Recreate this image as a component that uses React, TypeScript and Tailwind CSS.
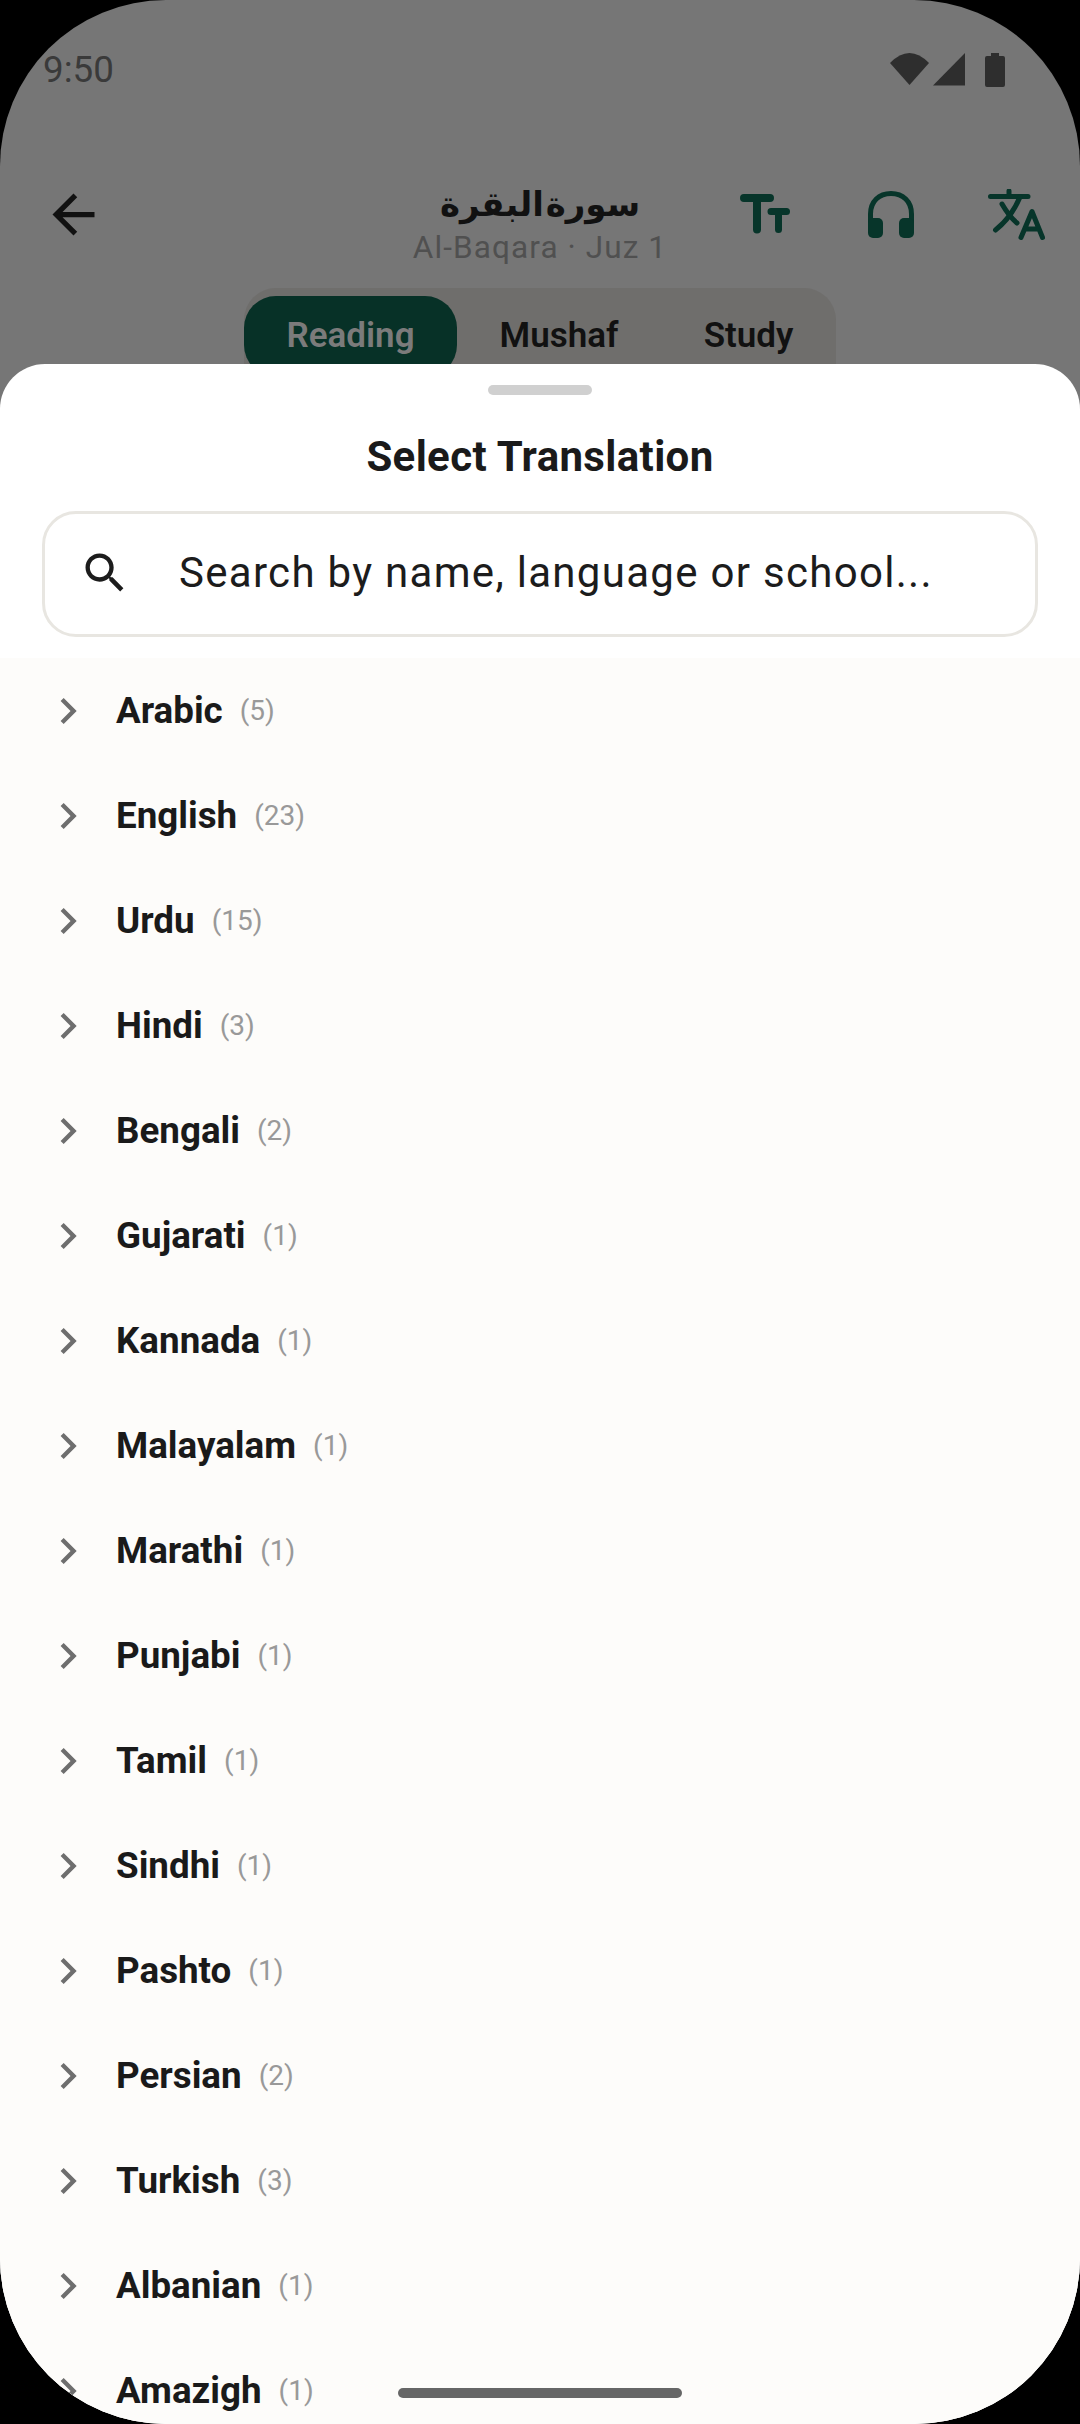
const languages = [
  { name: 'Arabic', count: 5 },
  { name: 'English', count: 23 },
  { name: 'Urdu', count: 15 },
  { name: 'Hindi', count: 3 },
  { name: 'Bengali', count: 2 },
  { name: 'Gujarati', count: 1 },
  { name: 'Kannada', count: 1 },
  { name: 'Malayalam', count: 1 },
  { name: 'Marathi', count: 1 },
  { name: 'Punjabi', count: 1 },
  { name: 'Tamil', count: 1 },
  { name: 'Sindhi', count: 1 },
  { name: 'Pashto', count: 1 },
  { name: 'Persian', count: 2 },
  { name: 'Turkish', count: 3 },
  { name: 'Albanian', count: 1 },
  { name: 'Amazigh', count: 1 },
];

const StatusIcons = () => (
  <div className="flex items-start">
    <svg width="40" height="33" viewBox="0 0 40 33" className="block">
      <path d="M0 10 Q19.5 -10 39 10 L19.5 32 Z" fill="#2e2e2e" />
    </svg>
    <svg width="33" height="33" viewBox="0 0 33 33" className="ml-[3px] block">
      <path d="M0 32.5 L32 0 V32.5 Z" fill="#2e2e2e" />
    </svg>
    <svg width="20" height="34" viewBox="0 0 20 34" className="ml-[19px] block">
      <path d="M6 0 H14 V3 H18 Q20 3 20 5 V32 Q20 34 18 34 H2 Q0 34 0 32 V5 Q0 3 2 3 H6 Z" fill="#2e2e2e" />
    </svg>
  </div>
);

const TextSizeIcon = () => (
  <svg width="50" height="40" viewBox="0 0 50 40" className="block">
    <g stroke="#07352a" strokeLinecap="round" fill="none">
      <path d="M4 4 H30 M17 4 V35.5" strokeWidth="8" />
      <path d="M31 17.5 H46.5 M38.5 17.5 V35.5" strokeWidth="7" />
    </g>
  </svg>
);

const HeadphonesIcon = () => (
  <svg width="46" height="47" viewBox="0 0 46 47" className="block">
    <path d="M2.5 32 V23 C2.5 10.5 11 2.5 23 2.5 C35 2.5 43.5 10.5 43.5 23 V32" stroke="#07352a" strokeWidth="5" fill="none" />
    <rect x="0" y="27" width="15" height="20" rx="5" fill="#07352a" />
    <rect x="31" y="27" width="15" height="20" rx="5" fill="#07352a" />
  </svg>
);

const TranslateIcon = () => (
  <svg width="57" height="51" viewBox="0 0 57 51" className="block">
    <g stroke="#07352a" strokeWidth="5" strokeLinecap="round" strokeLinejoin="round" fill="none">
      <path d="M2.5 7.5 H40 M21 2 V7.5" />
      <path d="M32 8 C27 20 19 32 7.5 41" />
      <path d="M14 15 C18 22 23 29 29 34" />
      <path d="M33 48.5 L44 22.5 L54.5 48.5 M37 40 H51" />
    </g>
  </svg>
);

const App = () => {
  return (
    <div className="w-[1080px] h-[2424px] bg-black overflow-hidden font-['Roboto',sans-serif]">
      <div className="relative w-full h-full rounded-[166px] overflow-hidden bg-[#767676]">
        {/* Status bar */}
        <div className="flex items-center justify-between h-[140px] pl-[43px] pr-[75px]">
          <span className="text-[36.75px] leading-none text-[#3a3a3a]">9:50</span>
          <StatusIcons />
        </div>

        {/* Header */}
        <div className="flex items-center h-[148px]">
          <div className="w-[400px] pl-[42px]">
            <svg width="63" height="63" viewBox="0 0 24 24" className="block" fill="#111111">
              <path d="M20 11H7.83l5.59-5.59L12 4l-8 8 8 8 1.41-1.41L7.83 13H20v-2z" />
            </svg>
          </div>
          <div className="w-[280px] flex flex-col items-center pt-[16px]">
            <span dir="rtl" className="h-[52px] text-[34px] leading-[52px] font-bold [word-spacing:-10px] text-[#111111] whitespace-nowrap font-['DejaVu_Sans',sans-serif]">
              سورة البقرة
            </span>
            <span className="text-[31.5px] leading-[36px] tracking-[1.1px] text-[#505050] whitespace-nowrap">
              Al-Baqara · Juz 1
            </span>
          </div>
          <div className="flex items-center w-[400px] pl-[60px]">
            <TextSizeIcon />
            <div className="ml-[78px]">
              <HeadphonesIcon />
            </div>
            <div className="ml-[74px]">
              <TranslateIcon />
            </div>
          </div>
        </div>

        {/* Tabs */}
        <div className="flex w-[592px] h-[120px] mx-auto pt-[8px] rounded-[32px] bg-[#6f6e6c] text-[35px] font-semibold">
          <div className="flex items-center justify-center w-[213px] h-[81px] rounded-[32px] bg-[#073127] text-[#7b7b7b]">Reading</div>
          <div className="flex items-center justify-center w-[204px] h-[81px] text-[#111111]">Mushaf</div>
          <div className="flex items-center justify-center w-[175px] h-[81px] text-[#111111]">Study</div>
        </div>

        {/* Bottom sheet */}
        <div className="absolute inset-x-0 top-[364px] bottom-0 flex flex-col rounded-t-[45px] bg-white overflow-hidden">
          <div className="w-[104px] h-[10px] mt-[21px] mx-auto rounded-full bg-[#d0d0d0] shrink-0" />
          <div className="h-[60px] mt-[31px] flex items-center justify-center text-[42px] tracking-[0.35px] font-bold text-[#1a1a1a] shrink-0">
            Select Translation
          </div>
          <div className="flex items-center h-[126px] mt-[25px] mx-[42px] pl-[34px] pb-[3px] border-[3px] border-[#e8e6e1] rounded-[34px] shrink-0">
            <svg width="52" height="52" viewBox="0 0 24 24" className="block shrink-0" fill="#1c1c1c">
              <path d="M15.5 14h-.79l-.28-.27C15.41 12.59 16 11.11 16 9.5 16 5.91 13.09 3 9.5 3S3 5.91 3 9.5 5.91 16 9.5 16c1.61 0 3.09-.59 4.23-1.57l.27.28v.79l5 4.99L20.49 19l-4.99-5zm-6 0C7.01 14 5 11.99 5 9.5S7.01 5 9.5 5 14 7.01 14 9.5 11.99 14 9.5 14z" />
            </svg>
            <span className="ml-[48px] text-[42px] leading-none tracking-[1.3px] text-[#1c1c1c] whitespace-nowrap">
              Search by name, language or school...
            </span>
          </div>

          {/* Language list */}
          <div className="flex-1 mt-[21px] bg-[#fdfcfa] overflow-hidden">
            {languages.map((lang) => (
              <div key={lang.name} className="flex items-center h-[105px] pl-[42px]">
                <svg width="52" height="52" viewBox="0 0 24 24" className="block shrink-0" fill="#6e6e6e">
                  <path d="M10 6L8.59 7.41 13.17 12l-4.58 4.59L10 18l6-6z" />
                </svg>
                <span className="ml-[22px] mt-[2px] text-[36.75px] leading-none font-bold text-[#1a1a1a]">{lang.name}</span>
                <span className="ml-[17px] text-[28px] leading-none text-[#999999]">({lang.count})</span>
              </div>
            ))}
          </div>
        </div>

        {/* Gesture pill */}
        <div className="absolute left-[398px] bottom-[26px] w-[284px] h-[10px] rounded-full bg-[#666666]" />
      </div>
    </div>
  );
};

export default App;
